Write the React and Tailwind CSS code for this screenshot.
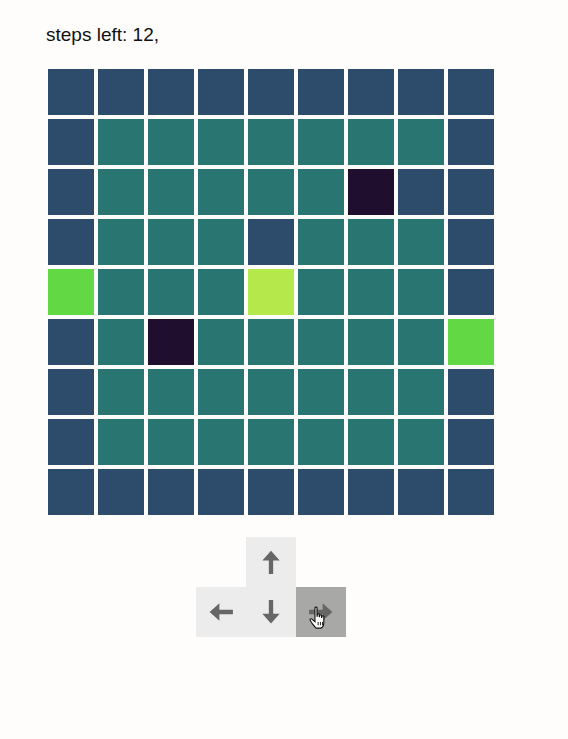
const N = "n", T = "t", D = "d", G = "g", Y = "y";

const board = [
  [N, N, N, N, N, N, N, N, N],
  [N, T, T, T, T, T, T, T, N],
  [N, T, T, T, T, T, D, N, N],
  [N, T, T, T, N, T, T, T, N],
  [G, T, T, T, Y, T, T, T, N],
  [N, T, D, T, T, T, T, T, G],
  [N, T, T, T, T, T, T, T, N],
  [N, T, T, T, T, T, T, T, N],
  [N, N, N, N, N, N, N, N, N],
];

const cellColor = {
  n: "bg-[#2d4b6b]",
  t: "bg-[#297572]",
  d: "bg-[#1f0e2e]",
  g: "bg-[#62d944]",
  y: "bg-[#b5e84b]",
};

function Arrow({ rotate = 0 }) {
  return (
    <svg width="26" height="26" viewBox="0 0 24 24" style={{ transform: `rotate(${rotate}deg)` }}>
      <path d="M12 1.5 L20 10.5 L14 10.5 L14 23 L10 23 L10 10.5 L4 10.5 Z" fill="#666" />
    </svg>
  );
}

function HandCursor() {
  return (
    <svg width="21" height="25" viewBox="0 0 18 22" className="absolute left-[13px] top-[19px]">
      <path
        d="M5 1.5 C5 0.7 6.8 0.7 6.8 1.5 L6.8 9 L7 9 L7 7.5 C7 6.7 8.8 6.7 8.8 7.5 L8.8 9.5 L9 9.5 L9 8.3 C9 7.5 10.8 7.5 10.8 8.3 L10.8 10 L11 10 L11 9.2 C11 8.4 12.8 8.4 12.8 9.2 L12.8 14.5 C12.8 17 11.5 19 10 19.5 L6 19.5 C4.8 18.5 3.5 16.5 2 14.5 L0.8 12.5 C0.3 11.6 1.5 10.8 2.3 11.5 L5 13.8 Z"
        fill="#fff"
        stroke="#111"
        strokeWidth="1"
      />
      <path d="M7.8 14 L7.8 17 M9.8 14 L9.8 17 M11.6 14 L11.6 17" stroke="#111" strokeWidth="0.8" />
    </svg>
  );
}

export default function App() {
  return (
    <div className="min-h-[739px] bg-[#fefdfc] pl-[46px] pt-[24px] font-['Liberation_Sans',Arial,sans-serif] text-[#111]">
      <p className="text-[19px] leading-[22px]">steps left: 12,</p>

      <div className="mt-[21px] w-[450px]">
        {board.map((row, r) => (
          <div key={r} className="flex">
            {row.map((c, i) => (
              <div key={i} className={`m-[2px] h-[46px] w-[46px] ${cellColor[c]}`} />
            ))}
          </div>
        ))}
      </div>

      <div className="mt-[20px] flex w-[450px] flex-col items-center">
        <div className="flex">
          <div className="h-[50px] w-[50px]" />
          <button className="flex h-[50px] w-[50px] items-center justify-center bg-[#ececec]">
            <Arrow />
          </button>
          <div className="h-[50px] w-[50px]" />
        </div>
        <div className="flex">
          <button className="flex h-[50px] w-[50px] items-center justify-center bg-[#ececec]">
            <Arrow rotate={-90} />
          </button>
          <button className="flex h-[50px] w-[50px] items-center justify-center bg-[#ececec]">
            <Arrow rotate={180} />
          </button>
          <button className="relative flex h-[50px] w-[50px] items-center justify-center bg-[#a8a8a6]">
            <Arrow rotate={90} />
            <HandCursor />
          </button>
        </div>
      </div>
    </div>
  );
}
